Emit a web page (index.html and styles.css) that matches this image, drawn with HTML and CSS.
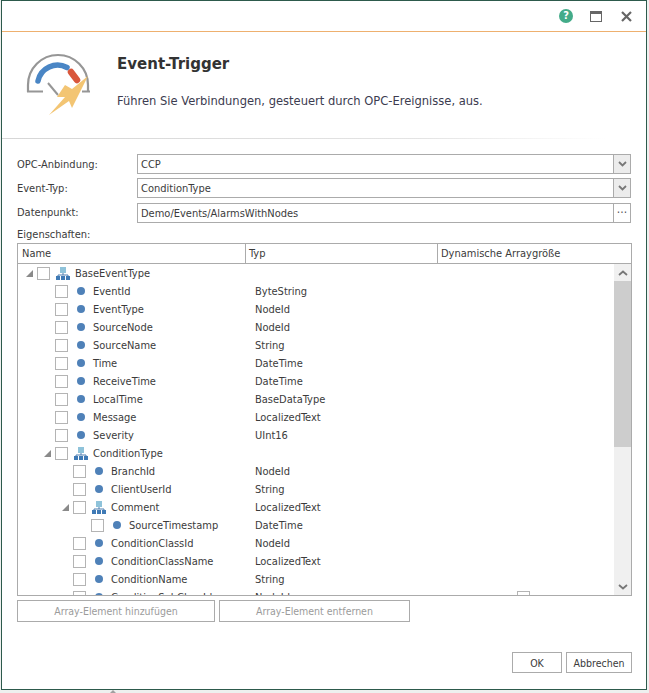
FILE: index.html

```html
<!DOCTYPE html>
<html lang="de">
<head>
  <meta charset="UTF-8">
  <title>Event-Trigger</title>
  <link rel="stylesheet" href="styles.css">
</head>
<body>
  <div class="window">
    <div class="titlebar">
      <span class="help">?</span>
      <svg class="win-icon" width="12" height="11" viewBox="0 0 12 11"><rect x="0.5" y="0.5" width="11" height="10" fill="none" stroke="#666"/><rect x="0" y="0" width="12" height="3" fill="#666"/></svg>
      <svg class="win-icon close" width="11" height="11" viewBox="0 0 11 11"><path d="M1 1L10 10M10 1L1 10" stroke="#666" stroke-width="2.2"/></svg>
    </div>

    <div class="header">
      <svg class="logo" width="66" height="66" viewBox="0 0 66 66">
        <path d="M2 42V35A30 30 0 0 1 62 35V42" fill="none" stroke="#969696" stroke-width="2.2"/>
        <path d="M1 41.5H17M56 41.5H64" fill="none" stroke="#969696" stroke-width="2"/>
        <path d="M12 31A20 20 0 0 1 41 17.5" fill="none" stroke="#4a86c5" stroke-width="5.5" stroke-linecap="round"/>
        <path d="M45 22L51 30" fill="none" stroke="#d9573c" stroke-width="6.5" stroke-linecap="round"/>
        <path d="M22 33L32 45" fill="none" stroke="#969696" stroke-width="2"/>
        <path d="M62 26L46 39L39 35L31 47H39L23 65L43 51L46 58Z" fill="#f3c573"/>
      </svg>
      <div class="header-text">
        <h1>Event-Trigger</h1>
        <p>Führen Sie Verbindungen, gesteuert durch OPC-Ereignisse, aus.</p>
      </div>
    </div>
    <div class="divider"></div>

    <div class="form">
      <label>OPC-Anbindung:</label>
      <div class="field"><span class="value">CCP</span><span class="field-btn"><svg width="9" height="6" viewBox="0 0 9 6"><path d="M1 1L4.5 4.5L8 1" fill="none" stroke="#777" stroke-width="1.8"/></svg></span></div>
      <label>Event-Typ:</label>
      <div class="field"><span class="value">ConditionType</span><span class="field-btn"><svg width="9" height="6" viewBox="0 0 9 6"><path d="M1 1L4.5 4.5L8 1" fill="none" stroke="#777" stroke-width="1.8"/></svg></span></div>
      <label>Datenpunkt:</label>
      <div class="field field-gap"><span class="value">Demo/Events/AlarmsWithNodes</span><span class="field-btn plain">···</span></div>
    </div>

    <div class="props-label">Eigenschaften:</div>

    <div class="grid">
      <div class="grid-head">
        <div class="col-name">Name</div>
        <div class="col-type">Typ</div>
        <div class="col-dyn">Dynamische Arraygröße</div>
      </div>
      <div class="grid-body">
        <div class="tree" id="tree"></div>
        <div class="scrollbar">
          <div class="sb-btn"><svg width="10" height="6" viewBox="0 0 10 6"><path d="M1 5L5 1.5L9 5" fill="none" stroke="#777" stroke-width="1.8"/></svg></div>
          <div class="sb-thumb"></div>
          <div class="sb-track"></div>
          <div class="sb-btn"><svg width="10" height="6" viewBox="0 0 10 6"><path d="M1 1L5 4.5L9 1" fill="none" stroke="#777" stroke-width="1.8"/></svg></div>
        </div>
      </div>
    </div>

    <div class="array-btns">
      <button class="btn-add" disabled>Array-Element hinzufügen</button>
      <button class="btn-remove" disabled>Array-Element entfernen</button>
    </div>

    <div class="footer">
      <button class="btn-ok">OK</button>
      <button class="btn-cancel">Abbrechen</button>
    </div>
  </div>
  <div class="grip"></div>

  <script>
    // level, has children, name, type
    const rows = [
      [0, true, "BaseEventType", ""],
      [1, false, "EventId", "ByteString"],
      [1, false, "EventType", "NodeId"],
      [1, false, "SourceNode", "NodeId"],
      [1, false, "SourceName", "String"],
      [1, false, "Time", "DateTime"],
      [1, false, "ReceiveTime", "DateTime"],
      [1, false, "LocalTime", "BaseDataType"],
      [1, false, "Message", "LocalizedText"],
      [1, false, "Severity", "UInt16"],
      [1, true, "ConditionType", ""],
      [2, false, "BranchId", "NodeId"],
      [2, false, "ClientUserId", "String"],
      [2, true, "Comment", "LocalizedText"],
      [3, false, "SourceTimestamp", "DateTime"],
      [2, false, "ConditionClassId", "NodeId"],
      [2, false, "ConditionClassName", "LocalizedText"],
      [2, false, "ConditionName", "String"],
      [2, false, "ConditionSubClassId", "NodeId"]
    ];

    const arrow = '<svg width="7" height="7" viewBox="0 0 7 7"><path d="M7 0V7H0Z" fill="#8a8a8a"/></svg>';
    const treeIcon = '<svg width="14" height="13" viewBox="0 0 14 13"><rect x="4" y="0" width="6" height="6" fill="#8fc3da"/><path d="M7 6V8M2 10V8H12V10" fill="none" stroke="#4f7fb0"/><rect x="0" y="9" width="4" height="4" fill="#3f7ab5"/><rect x="5" y="9" width="4" height="4" fill="#3f7ab5"/><rect x="10" y="9" width="4" height="4" fill="#3f7ab5"/></svg>';

    const tree = document.getElementById("tree");
    rows.forEach(([level, parent, name, type]) => {
      const row = document.createElement("div");
      row.className = "row";
      const icon = parent ? treeIcon : '<span class="dot"></span>';
      row.innerHTML =
        `<div class="cell-name level-${level}">` +
        `<span class="arrow">${parent ? arrow : ""}</span>` +
        `<span class="check"></span><span class="icon">${icon}</span>` +
        `<span class="name">${name}</span></div>` +
        `<div class="cell-type">${type}</div>` +
        `<div class="cell-dyn">${name === "ConditionSubClassId" ? '<span class="check"></span>' : ""}</div>`;
      tree.appendChild(row);
    });
  </script>
</body>
</html>
```

FILE: styles.css

```css
* { box-sizing: border-box; }
html, body { height: 100%; }
body { margin: 0; position: relative; background-color: #eef0ef; font-family: "DejaVu Sans Condensed", "DejaVu Sans", sans-serif; font-stretch: condensed; font-size: 11px; color: #3b3b3b; overflow: hidden; }

.window { width: 646px; height: 690px; margin-left: 1px; background-color: #fff; border: 1px solid #2d5a4c; }
.grip { position: absolute; left: 110px; top: 690px; width: 0; height: 0; border: 3px solid transparent; border-bottom-color: #a0a0a0; border-top-width: 0; }

.titlebar { height: 31px; display: flex; align-items: center; justify-content: flex-end; gap: 17px; padding-right: 14px; border-bottom: 1px solid #eeb06f; }
.help { width: 14px; height: 14px; border-radius: 50%; background-color: #43ab89; color: #fff; font-weight: bold; font-size: 11px; line-height: 14px; text-align: center; }
.win-icon { display: block; }
.close { margin-left: 2px; }

.header { height: 106px; display: flex; }
.logo { margin: 18px 0 0 24px; flex: none; }
.header-text { margin-left: 25px; }
h1 { margin: 22px 0 0; font-family: "DejaVu Sans", sans-serif; font-stretch: normal; font-size: 15px; line-height: 20px; font-weight: bold; color: #333; }
p { margin: 18px 0 0; font-size: 12.8px; line-height: 18px; color: #3c3c50; }

.divider { height: 1px; margin-right: 40px; background: linear-gradient(to right, #d6d6d6 0%, #e4e4e4 70%, #fff 100%); }

.form { display: grid; grid-template-columns: 120px 494px; row-gap: 4px; align-items: center; padding: 15px 0 0 15px; }
.field { height: 20px; display: flex; border: 1px solid #ababab; }
.field-gap { margin-top: 1px; }
.value { flex: 1; padding-left: 3px; line-height: 19px; }
.field-btn { width: 17px; display: flex; align-items: center; justify-content: center; background-color: #ececec; border-left: 1px solid #ababab; }
.field-btn.plain { background-color: #fff; font-size: 12px; color: #555; }

.props-label { margin: 4px 0 0 15px; height: 15px; line-height: 15px; }

.grid { margin: 1px 0 0 15px; width: 615px; height: 353px; border: 1px solid #ababab; }
.grid-head { height: 20px; display: flex; border-bottom: 1px solid #ababab; line-height: 19px; }
.col-name { width: 228px; padding-left: 4px; border-right: 1px solid #ababab; }
.col-type { width: 192px; padding-left: 3px; border-right: 1px solid #ababab; }
.col-dyn { flex: 1; padding-left: 3px; }

.grid-body { height: 331px; display: flex; overflow: hidden; }
.tree { flex: 1; overflow: hidden; }
.row { height: 18px; display: flex; align-items: center; }
.cell-name { width: 237px; display: flex; align-items: center; flex: none; }
.level-0 { padding-left: 8px; }
.level-1 { padding-left: 26px; }
.level-2 { padding-left: 44px; }
.level-3 { padding-left: 62px; }
.arrow { width: 11px; height: 13px; display: flex; align-items: center; flex: none; }
.check { width: 13px; height: 13px; display: block; flex: none; background-color: #fff; border: 1px solid #b4b4b4; }
.icon { width: 14px; height: 13px; margin-left: 6px; display: flex; align-items: center; justify-content: center; flex: none; }
.dot { width: 8px; height: 8px; border-radius: 50%; background-color: #4f81b8; }
.name { margin-left: 5px; white-space: nowrap; }
.cell-type { width: 262px; flex: none; }
.cell-dyn { flex: 1; }

.scrollbar { width: 17px; flex: none; display: flex; flex-direction: column; background-color: #f0f0f0; }
.sb-btn { height: 17px; display: flex; align-items: center; justify-content: center; flex: none; }
.sb-thumb { height: 166px; background-color: #cdcdcd; }
.sb-track { flex: 1; }

button { font-family: inherit; font-stretch: condensed; font-size: 10.5px; color: #3b3b3b; background-color: #fff; border: 1px solid #ababab; padding: 0; }
button:disabled { color: #9b9b9b; }

.array-btns { display: flex; gap: 4px; margin: 4px 0 0 15px; }
.btn-add { width: 198px; height: 22px; }
.btn-remove { width: 191px; height: 22px; }

.footer { display: flex; justify-content: flex-end; gap: 4px; margin-top: 30px; padding-right: 14px; }
.btn-ok { width: 50px; height: 21px; }
.btn-cancel { width: 66px; height: 21px; }
```
